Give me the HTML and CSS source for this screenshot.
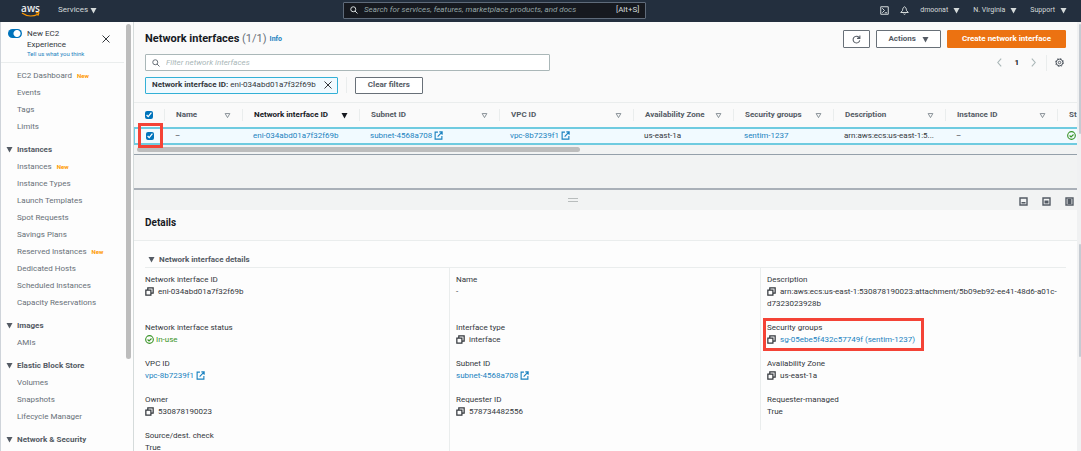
FILE: index.html
```html
<!DOCTYPE html>
<html lang="en">
<head>
<meta charset="utf-8">
<title>Network interfaces | EC2 Management Console</title>
<link rel="stylesheet" href="styles.css">
</head>
<body>
<svg class="defs" aria-hidden="true">
  <symbol id="down" viewBox="0 0 8 8"><path d="M.6 1.2h6.8L4 7.4z" fill="currentColor"/></symbol>
  <symbol id="sort" viewBox="0 0 8 8"><path d="M1.3 1.8h5.4L4 6.4z" fill="none" stroke="currentColor"/></symbol>
  <symbol id="search" viewBox="0 0 16 16"><g fill="none" stroke="currentColor" stroke-width="2"><circle cx="6.5" cy="6.5" r="5"/><path d="M10 10l5 5"/></g></symbol>
  <symbol id="close" viewBox="0 0 16 16"><path d="M1 1l14 14M15 1L1 15" fill="none" stroke="currentColor" stroke-width="2"/></symbol>
  <symbol id="copy" viewBox="0 0 16 16"><path d="M1.5 5.500h9v9h-9zM5 5V1.500h9.500V11h-3.500" fill="none" stroke="currentColor" stroke-width="2.200"/></symbol>
  <symbol id="external" viewBox="0 0 16 16"><path d="M7 2H2v12.5h12V9M9.5 1.5h5v5M14.5 1.5L6.5 10" fill="none" stroke="currentColor" stroke-width="2"/></symbol>
  <symbol id="ok" viewBox="0 0 16 16"><g fill="none" stroke="currentColor" stroke-width="2"><circle cx="8" cy="8" r="6.8"/><path d="M4.6 8l2.6 2.6 4.4-4.4"/></g></symbol>
</svg>

<header class="topbar">
  <a class="logo" href="#" aria-label="AWS">
    <span class="logo-word">aws</span>
    <svg class="smile" viewBox="0 0 19 5" aria-hidden="true"><path d="M1 1c5 3.600 11 3.600 16 1.200M14.800.8c2-.5 3.200-.2 3 .4s-.3 1.600-1 2.400" fill="none" stroke="#f90" stroke-width="1.200"/></svg>
  </a>
  <button class="nav-button services">Services <svg class="caret" aria-hidden="true"><use href="#down"/></svg></button>
  <label class="global-search">
    <svg class="icon-8" aria-hidden="true"><use href="#search"/></svg>
    <input type="search" aria-label="Search" placeholder="Search for services, features, marketplace products, and docs">
    <span>[Alt+S]</span>
  </label>
  <nav class="account">
    <button class="nav-button" aria-label="CloudShell"><svg class="icon-9" viewBox="0 0 18 18" aria-hidden="true"><path d="M1.500 1.500h15v15h-15zM4.500 4.500L9 9l-4.500 4.500M9.500 13.500H14" fill="none" stroke="currentColor" stroke-width="2"/></svg></button>
    <button class="nav-button" aria-label="Notifications"><svg class="icon-9" viewBox="0 0 18 18" aria-hidden="true"><path d="M9 1.500C6 3 5.500 5 5 9l-3.500 4h15L13 9c-.5-4-1-6-4-7.500zM7 15.500c1 1.500 3 1.500 4 0" fill="none" stroke="currentColor" stroke-width="2"/></svg></button>
    <button class="nav-button">dmoonat <svg class="caret" aria-hidden="true"><use href="#down"/></svg></button>
    <button class="nav-button">N. Virginia <svg class="caret" aria-hidden="true"><use href="#down"/></svg></button>
    <button class="nav-button">Support <svg class="caret" aria-hidden="true"><use href="#down"/></svg></button>
  </nav>
</header>

<div class="workspace">
  <aside class="sidebar">
    <div class="experience">
      <input class="switch" type="checkbox" role="switch" id="experience" checked>
      <div class="experience-text">
        <label for="experience">New EC2 Experience</label>
        <a href="#">Tell us what you think</a>
      </div>
      <button class="plain" aria-label="Close"><svg class="icon-8" aria-hidden="true"><use href="#close"/></svg></button>
    </div>
    <nav class="menu">
      <a href="#">EC2 Dashboard <em>New</em></a>
      <a href="#">Events</a>
      <a href="#">Tags</a>
      <a href="#">Limits</a>
      <h3><svg class="caret" aria-hidden="true"><use href="#down"/></svg>Instances</h3>
      <a href="#">Instances <em>New</em></a>
      <a href="#">Instance Types</a>
      <a href="#">Launch Templates</a>
      <a href="#">Spot Requests</a>
      <a href="#">Savings Plans</a>
      <a href="#">Reserved Instances <em>New</em></a>
      <a href="#">Dedicated Hosts</a>
      <a href="#">Scheduled Instances</a>
      <a href="#">Capacity Reservations</a>
      <h3><svg class="caret" aria-hidden="true"><use href="#down"/></svg>Images</h3>
      <a href="#">AMIs</a>
      <h3><svg class="caret" aria-hidden="true"><use href="#down"/></svg>Elastic Block Store</h3>
      <a href="#">Volumes</a>
      <a href="#">Snapshots</a>
      <a href="#">Lifecycle Manager</a>
      <h3><svg class="caret" aria-hidden="true"><use href="#down"/></svg>Network &amp; Security</h3>
    </nav>
    <div class="side-thumb"></div>
  </aside>

  <main class="main">
    <section class="list">
      <div class="list-head">
        <h1>Network interfaces <span>(1/1)</span></h1>
        <a class="info" href="#">Info</a>
        <div class="actions">
          <button class="button refresh" aria-label="Refresh"><svg class="icon-9" viewBox="0 0 16 16" aria-hidden="true"><path d="M13.800 9.500A6 6 0 1 1 12.500 4.200L14 6M14 1v5H9" fill="none" stroke="currentColor" stroke-width="1.900"/></svg></button>
          <button class="button">Actions <svg class="caret" aria-hidden="true"><use href="#down"/></svg></button>
          <button class="button primary">Create network interface</button>
        </div>
      </div>
      <div class="filter-row">
        <label class="filter">
          <svg class="icon-8" aria-hidden="true"><use href="#search"/></svg>
          <input type="search" aria-label="Filter" placeholder="Filter network interfaces">
        </label>
        <div class="pager">
          <button class="plain arrow" aria-label="Previous page"><svg class="icon-9" viewBox="0 0 16 16" aria-hidden="true"><path d="M11 1L5 8l6 7" fill="none" stroke="currentColor" stroke-width="2"/></svg></button>
          <b>1</b>
          <button class="plain arrow" aria-label="Next page"><svg class="icon-9" viewBox="0 0 16 16" aria-hidden="true"><path d="M5 1l6 7-6 7" fill="none" stroke="currentColor" stroke-width="2"/></svg></button>
          <span class="rule"></span>
          <button class="plain" aria-label="Preferences"><svg class="icon-9" viewBox="0 0 18 18" aria-hidden="true"><g fill="none" stroke="currentColor"><circle cx="9" cy="9" r="6.600" stroke-width="2"/><circle cx="9" cy="9" r="2.500" stroke-width="2"/><circle cx="9" cy="9" r="8" stroke-width="1.800" stroke-dasharray="3.100 3.180"/></g></svg></button>
        </div>
      </div>
      <div class="tokens">
        <span class="token"><span><b>Network interface ID:</b> eni-034abd01a7f32f69b</span><button class="plain" aria-label="Remove filter"><svg class="icon-8" aria-hidden="true"><use href="#close"/></svg></button></span>
        <span class="rule"></span>
        <button class="button">Clear filters</button>
      </div>
      <table class="grid">
        <colgroup><col class="c-check"><col class="c-name"><col class="c-eni"><col class="c-subnet"><col class="c-vpc"><col class="c-mid"><col class="c-mid"><col class="c-wide"><col class="c-wide"><col class="c-end"></colgroup>
        <thead>
          <tr>
            <th><input type="checkbox" aria-label="Select all" checked></th>
            <th><div>Name <svg class="sort" aria-hidden="true"><use href="#sort"/></svg></div></th>
            <th class="sorted"><div>Network interface ID <svg class="sort" aria-hidden="true"><use href="#down"/></svg></div></th>
            <th><div>Subnet ID <svg class="sort" aria-hidden="true"><use href="#sort"/></svg></div></th>
            <th><div>VPC ID <svg class="sort" aria-hidden="true"><use href="#sort"/></svg></div></th>
            <th><div>Availability Zone <svg class="sort" aria-hidden="true"><use href="#sort"/></svg></div></th>
            <th><div>Security groups <svg class="sort" aria-hidden="true"><use href="#sort"/></svg></div></th>
            <th><div>Description <svg class="sort" aria-hidden="true"><use href="#sort"/></svg></div></th>
            <th><div>Instance ID <svg class="sort" aria-hidden="true"><use href="#sort"/></svg></div></th>
            <th><div>St</div></th>
          </tr>
        </thead>
        <tbody>
          <tr>
            <td class="marked"><input type="checkbox" aria-label="Select eni-034abd01a7f32f69b" checked></td>
            <td>–</td>
            <td><a href="#">eni-034abd01a7f32f69b</a></td>
            <td><a href="#">subnet-4568a708 <svg class="icon-9" aria-hidden="true"><use href="#external"/></svg></a></td>
            <td><a href="#">vpc-8b7239f1 <svg class="icon-9" aria-hidden="true"><use href="#external"/></svg></a></td>
            <td>us-east-1a</td>
            <td><a href="#">sentim-1237</a></td>
            <td>arn:aws:ecs:us-east-1:5...</td>
            <td>–</td>
            <td class="status"><svg class="icon-9 ok" aria-label="In-use"><use href="#ok"/></svg></td>
          </tr>
        </tbody>
      </table>
      <div class="h-track"><div class="h-thumb"></div></div>
    </section>

    <section class="split">
      <div class="split-bar">
        <span class="handle"></span>
        <div class="sizes">
          <button class="plain" aria-label="Small panel"><svg class="icon-9" viewBox="0 0 9 9" aria-hidden="true"><path d="M1 1h7v7H1z" fill="none" stroke="currentColor" stroke-width="1.400"/><path d="M2.500 5h4v1.500h-4z" fill="currentColor"/></svg></button>
          <button class="plain" aria-label="Medium panel"><svg class="icon-9" viewBox="0 0 9 9" aria-hidden="true"><path d="M1 1h7v7H1z" fill="none" stroke="currentColor" stroke-width="1.400"/><path d="M2.500 3.500h4v3h-4z" fill="currentColor"/></svg></button>
          <button class="plain" aria-label="Full panel"><svg class="icon-9" viewBox="0 0 9 9" aria-hidden="true"><path d="M1 1h7v7H1z" fill="none" stroke="currentColor" stroke-width="1.400"/><path d="M2.500 2h4v5h-4z" fill="currentColor"/></svg></button>
        </div>
      </div>
      <h2>Details</h2>
      <div class="details">
        <h3><svg class="caret" aria-hidden="true"><use href="#down"/></svg>Network interface details</h3>
        <dl class="fields">
          <div><dt>Network interface ID</dt><dd><svg class="copy" aria-hidden="true"><use href="#copy"/></svg>eni-034abd01a7f32f69b</dd></div>
          <div><dt>Name</dt><dd>-</dd></div>
          <div><dt>Description</dt><dd><svg class="copy" aria-hidden="true"><use href="#copy"/></svg>arn:aws:ecs:us-east-1:530878190023:attachment/5b09eb92-ee41-48d6-a01c-d7323023928b</dd></div>
          <div><dt>Network interface status</dt><dd class="ok"><svg class="icon-9" aria-hidden="true"><use href="#ok"/></svg> In-use</dd></div>
          <div><dt>Interface type</dt><dd><svg class="copy" aria-hidden="true"><use href="#copy"/></svg>interface</dd></div>
          <div><div class="highlight"><dt>Security groups</dt><dd><svg class="copy" aria-hidden="true"><use href="#copy"/></svg><a href="#">sg-05ebe5f432c57749f (sentim-1237)</a></dd></div></div>
          <div><dt>VPC ID</dt><dd><a href="#">vpc-8b7239f1 <svg class="icon-9" aria-hidden="true"><use href="#external"/></svg></a></dd></div>
          <div><dt>Subnet ID</dt><dd><a href="#">subnet-4568a708 <svg class="icon-9" aria-hidden="true"><use href="#external"/></svg></a></dd></div>
          <div><dt>Availability Zone</dt><dd><svg class="copy" aria-hidden="true"><use href="#copy"/></svg>us-east-1a</dd></div>
          <div><dt>Owner</dt><dd><svg class="copy" aria-hidden="true"><use href="#copy"/></svg>530878190023</dd></div>
          <div><dt>Requester ID</dt><dd><svg class="copy" aria-hidden="true"><use href="#copy"/></svg>578734482556</dd></div>
          <div><dt>Requester-managed</dt><dd>True</dd></div>
          <div><dt>Source/dest. check</dt><dd>True</dd></div>
          <div></div>
        </dl>
      </div>
    </section>
  </main>
  <div class="page-scroll"><span class="thumb-a"></span><span class="thumb-b"></span></div>
</div>
</body>
</html>
```

FILE: styles.css
```css
* { box-sizing: border-box; }

body {
  margin: 0;
  height: 100vh;
  display: flex;
  flex-direction: column;
  overflow: hidden;
  font: 8px/12px Roboto, "Noto Sans", sans-serif;
  color: #33373c;
  background: #fdfdfd;
}

h1, h2, h3, dl, dd { margin: 0; }
a { color: #1b82c0; text-decoration: none; }
svg { flex: none; }
button, input { font: inherit; color: inherit; }
button { cursor: pointer; }
input[type="search"] {
  flex: 1;
  min-width: 0;
  padding: 0;
  border: 0;
  outline: 0;
  background: none;
  font-style: italic;
}
input[type="checkbox"] { accent-color: #0073bb; }

.defs { position: absolute; width: 0; height: 0; }
.icon-8 { width: 8px; height: 8px; }
.icon-9 { width: 9px; height: 9px; vertical-align: -2px; }
.caret { width: 7px; height: 7px; }
.plain { display: flex; padding: 0; border: 0; background: none; }
.rule { width: 1px; height: 16px; background: #eaeded; }
.ok { color: #3a9428; }

/* Top bar */
.topbar {
  flex: none;
  display: flex;
  align-items: center;
  height: 22px;
  padding: 0 14px 2px 21px;
  background: #232f3e;
  color: #d5dbdb;
}
.logo { display: flex; flex-direction: column; align-items: center; width: 19px; color: #eee; }
.logo-word { font: 600 10px/8px "Open Sans", sans-serif; }
.smile { width: 19px; height: 5px; }
.nav-button {
  display: flex;
  align-items: center;
  gap: 5px;
  padding: 0;
  border: 0;
  background: none;
  font-size: 7px;
}
.services { flex: none; width: 40px; margin-left: 18px; gap: 2px; font-size: 8px; }
.global-search {
  flex: none;
  display: flex;
  align-items: center;
  gap: 6px;
  width: 29%;
  height: 17px;
  margin-left: 245px;
  padding: 0 6px;
  border: 1px solid #5f6b7a;
  border-radius: 1px;
  background: #16191f;
}
.global-search input::placeholder { color: #95a5a6; opacity: 1; }
.account { display: flex; align-items: center; gap: 13px; margin-left: auto; }
.account .nav-button:nth-child(-n+2) { margin-right: -2px; }

/* Sidebar */
.workspace { flex: 1; display: flex; min-height: 0; }
.sidebar {
  position: relative;
  flex: none;
  width: 134px;
  overflow: hidden;
  border-left: 1px solid #cfd4da;
  border-right: 1px solid #d5dbdb;
}
.experience {
  display: flex;
  align-items: flex-start;
  height: 41px;
  margin-right: 9px;
  padding: 6px 14px 0 7px;
  border-bottom: 1px solid #eaeded;
}
.experience-text { display: flex; flex-direction: column; width: 75px; margin-left: 5px; line-height: 11px; }
.experience-text label { width: 50px; }
.experience-text a { font-size: 6px; line-height: 8px; white-space: nowrap; }
.experience .plain { margin: 7px 0 0 auto; }
.switch {
  appearance: none;
  flex: none;
  width: 14px;
  height: 9px;
  margin: 1px 0 0;
  border-radius: 5px;
  background: radial-gradient(circle at 9px 50%, #fff 3px, #0073bb 4px);
}
.menu { padding: 4px 0 0 16px; color: #687078; line-height: 17px; }
.menu a { display: block; height: 17px; color: inherit; }
.menu em { margin-left: 3px; color: #ff9900; font-size: 6px; line-height: 6px; font-style: normal; font-weight: bold; }
.menu h3 {
  display: flex;
  align-items: center;
  gap: 4px;
  margin: 6px 0 0 -11px;
  color: #545b64;
  font-size: 8px;
}
.side-thumb {
  position: absolute;
  top: 2px;
  right: 2px;
  width: 5px;
  height: 78%;
  border-radius: 3px;
  background: #bdbdbd;
}

/* List */
.main { flex: 1; display: flex; flex-direction: column; min-width: 0; }
.list { flex: none; height: 166px; background: #f2f3f3; }
.list-head, .filter-row, .tokens { display: flex; align-items: center; padding: 0 11px; background: #fafafa; }
.list-head { height: 32px; padding-top: 2px; }
.list-head h1 { font-size: 11px; line-height: 16px; color: #16191f; }
.list-head h1 span { color: #687078; font-weight: normal; }
.info { margin-left: 3px; font-size: 7px; font-weight: bold; }
.actions { display: flex; gap: 6px; margin-left: auto; }
.button {
  display: flex;
  align-items: center;
  justify-content: center;
  gap: 6px;
  height: 18px;
  padding: 0 12px;
  border: 1px solid #687078;
  border-radius: 1px;
  background: #fff;
  color: #545b64;
  font-weight: bold;
}
.actions .button { padding: 0 11px; }
.actions .refresh { width: 27px; padding: 0; }
.actions .primary { padding: 0 14px; border-color: #ec7211; background: #ec7211; color: #fff; }
.filter-row { height: 17px; }
.filter {
  display: flex;
  align-items: center;
  gap: 6px;
  width: 44%;
  height: 17px;
  padding: 0 6px;
  border: 1px solid #aab7b8;
  border-radius: 1px;
  background: #fff;
  color: #687078;
}
.filter input::placeholder { color: #aab7b8; opacity: 1; }
.pager { display: flex; align-items: center; gap: 10px; margin-left: auto; padding-right: 2px; color: #545b64; }
.pager .rule { margin: 0 -2px; }
.pager b { color: #16191f; }
.arrow { color: #aab7b8; }
.tokens { gap: 8px; height: 31px; padding-bottom: 3px; }
.token {
  display: flex;
  align-items: center;
  gap: 8px;
  height: 17px;
  padding: 0 5px 0 6px;
  border: 1px solid #33b0d6;
  border-radius: 1px;
  background: #f1faff;
}
.tokens .button { height: 17px; }

.grid {
  width: 100%;
  table-layout: fixed;
  border-collapse: separate;
  border-spacing: 0;
  border-top: 1px solid #eaeded;
  background: #fafafa;
}
.c-check { width: 30px; }
.c-name { width: 78px; }
.c-eni { width: 117px; }
.c-subnet { width: 140px; }
.c-vpc { width: 134px; }
.c-mid { width: 100px; }
.c-wide { width: 112px; }
.c-end { width: 20px; }
.grid th, .grid td { padding: 0 0 0 11px; text-align: left; white-space: nowrap; }
.grid th { height: 24px; color: #545b64; }
.grid th div {
  display: flex;
  align-items: center;
  justify-content: space-between;
  height: 12px;
  margin-left: -11px;
  padding: 0 11px 0 11px;
  border-left: 1px solid #eaeded;
}
.grid th:last-child div { padding-right: 0; }
.sort { width: 7px; height: 7px; color: #7b858c; }
.grid .sorted, .sorted .sort { color: #16191f; }
.grid td {
  height: 18px;
  border-top: 2px solid #6fcbe0;
  border-bottom: 2px solid #6fcbe0;
  background: #f1faff;
}
.grid td:first-child { border-left: 1px solid #6fcbe0; }
.grid .status { padding-left: 10px; }
.grid input { display: block; width: 8px; height: 8px; margin: 0; }
.marked { position: relative; }
.marked::after {
  content: "";
  position: absolute;
  inset: -6px 1px -5px 3px;
  border: 3px solid #f44336;
}
.h-track { height: 10px; padding-top: 2px; border-bottom: 1px solid #95a0aa; }
.h-thumb { width: 47%; height: 5px; margin-left: 3px; border-radius: 3px; background: #bdbdbd; }

/* Split panel */
.split { flex: 1; display: flex; flex-direction: column; min-height: 0; border-top: 2px solid #aab0b8; }
.split-bar {
  flex: none;
  display: flex;
  align-items: center;
  justify-content: flex-end;
  position: relative;
  height: 20px;
  background: #f2f3f3;
}
.handle {
  position: absolute;
  top: 8px;
  left: 46%;
  width: 10px;
  height: 4px;
  border: solid #b9bdbd;
  border-width: 1px 0;
}
.sizes { display: flex; gap: 14px; padding: 3px 3px 0 0; color: #545b64; }
.split h2 {
  flex: none;
  height: 31px;
  padding: 5px 11px 0;
  border-bottom: 1px solid #eaeded;
  background: #fafafa;
  color: #16191f;
  font-size: 10px;
  line-height: 16px;
}
.details { padding: 12px 11px 0; }
.details h3 {
  display: flex;
  align-items: center;
  gap: 4px;
  height: 15px;
  padding: 0 0 1px 3px;
  border-bottom: 1px solid #eaeded;
  color: #545b64;
  font-size: 8px;
}
.fields { display: grid; grid-template-columns: 304fr 311fr 306fr; }
.fields > div { padding: 0 0 12px 6px; border-left: 1px solid #eaeded; }
.fields > div:nth-child(3n+1) { padding-left: 0; border-left: 0; }
.fields > div:nth-child(-n+3) { padding-top: 6px; }
.copy { width: 9px; height: 9px; margin-right: 4px; vertical-align: -2px; }
.highlight { position: relative; width: max-content; }
.highlight::after {
  content: "";
  position: absolute;
  inset: -4px -9px -5px -4px;
  border: 3px solid #f44336;
}

/* Page scroll rail */
.page-scroll {
  flex: none;
  display: flex;
  flex-direction: column;
  justify-content: space-between;
  width: 4px;
  padding: 2px 0 94px 2px;
  background: #f0f1f2;
}
.page-scroll span { width: 2px; border-radius: 1px; background: #c5cbd2; }
.thumb-a { height: 33%; }
.thumb-b { height: 34%; }
```
